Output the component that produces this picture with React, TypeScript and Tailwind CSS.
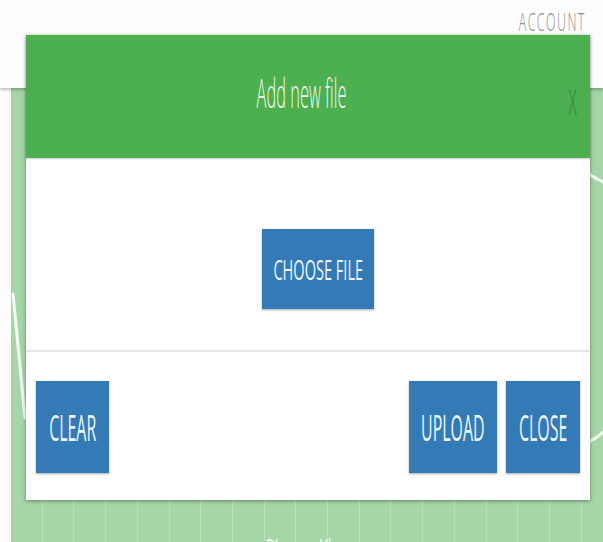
import React from "react";

// narrow text: the face is drawn condensed, so squeeze it horizontally
function Narrow({ className, children }: { className: string; children: React.ReactNode }) {
    return <span className={`inline-block whitespace-nowrap ${className}`}>{children}</span>;
}

function BlueButton({ className, textClass, label }: { className: string; textClass: string; label: string }) {
    return (
        <button className={`flex items-center justify-center bg-[#337ab7] text-[#eef6fb] shadow-[0_1px_2px_rgba(0,0,0,0.35)] ${className}`}>
            <Narrow className={textClass}>{label}</Narrow>
        </button>
    );
}

export default function App() {
    return (
        <div className="relative w-[603px] h-[542px] overflow-hidden bg-[#fdfdfd] font-['Open_Sans',sans-serif]">
            {/* top bar */}
            <header className="h-[88px] flex justify-end items-start pr-[17px] pt-[10px] bg-[#fdfdfd] shadow-[0_2px_3px_rgba(0,0,0,0.25)] relative z-10">
                <Narrow className="text-[26px] leading-[22px] font-light tracking-[3px] text-[#8f8f8f] scale-x-[0.48] origin-right">ACCOUNT</Narrow>
            </header>

            {/* page behind the dialog */}
            <main className="ml-[11px] h-[454px] bg-[#a5d6a7] relative flex flex-col">
                <svg className="absolute inset-0" width="592" height="454" viewBox="0 0 592 454" fill="none">
                    <path d="M2 206 L14 330" stroke="#f4fbf4" strokeWidth="3" strokeLinecap="round" />
                    <path d="M578 86 Q584 90 592 94" stroke="#f4fbf4" strokeWidth="3" strokeLinecap="round" />
                    <path d="M578 354 Q586 350 592 344" stroke="#f4fbf4" strokeWidth="3" strokeLinecap="round" />
                </svg>
                <div className="mt-auto h-[42px] flex justify-center pl-[7px] bg-[repeating-linear-gradient(90deg,transparent_0px,transparent_30.7px,rgba(255,255,255,0.22)_30.7px,rgba(255,255,255,0.22)_31.7px)]">
                    <Narrow className="mt-[34px] text-[30px] leading-[30px] text-[#f6fbf6] scale-x-[0.5]">Rizwan Khan</Narrow>
                </div>
            </main>

            {/* dialog */}
            <section className="absolute left-[26px] top-[35px] w-[564px] h-[465px] z-20 bg-white flex flex-col shadow-[0_1px_4px_rgba(0,0,0,0.4)]">
                <div className="h-[123px] bg-[#4caf50] relative flex justify-center items-start pt-[36px] pr-[14px] shadow-[0_1px_2px_rgba(0,0,0,0.2)]">
                    <Narrow className="text-[40px] leading-[44px] font-light text-[#f1faf1] scale-x-[0.41]">Add new file</Narrow>
                    <span className="absolute right-[8px] top-[49px] inline-block text-[36px] leading-[36px] font-light text-[#37833b] scale-x-[0.42]">X</span>
                </div>

                <div className="h-[194px] flex justify-center pt-[71px] pl-[20px] border-b-2 border-[#e6e8e6]">
                    <BlueButton className="w-[112px] h-[80px]" textClass="text-[28px] scale-x-[0.52]" label="CHOOSE FILE" />
                </div>

                <div className="flex-1 flex items-start pt-[29px] px-[10px]">
                    <BlueButton className="w-[73px] h-[92px]" textClass="text-[37px] scale-x-[0.43]" label="CLEAR" />
                    <div className="ml-auto flex gap-[9px]">
                        <BlueButton className="w-[88px] h-[92px]" textClass="text-[37px] scale-x-[0.43]" label="UPLOAD" />
                        <BlueButton className="w-[74px] h-[92px]" textClass="text-[37px] scale-x-[0.43]" label="CLOSE" />
                    </div>
                </div>
            </section>
        </div>
    );
}
